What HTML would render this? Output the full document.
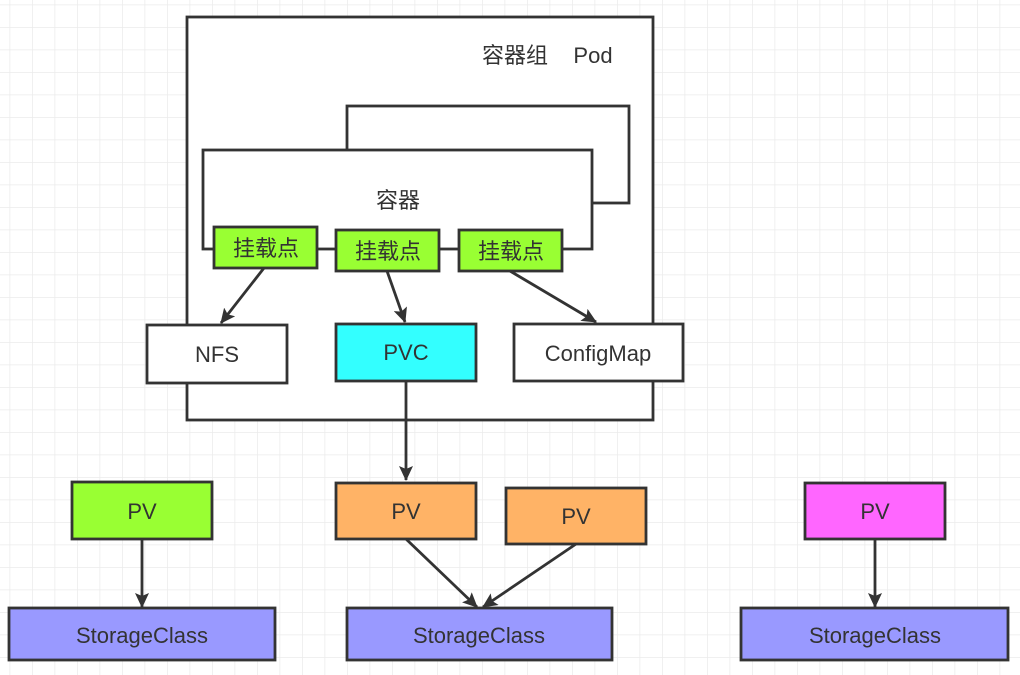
<!DOCTYPE html>
<html><head><meta charset="utf-8"><style>
html,body{margin:0;padding:0;background:#fff;}
svg{display:block;}
text{font-family:"Liberation Sans","Noto Sans CJK SC",sans-serif;fill:#333;}
</style></head><body>
<svg width="1020" height="675" viewBox="0 0 1020 675" xmlns="http://www.w3.org/2000/svg">
<defs>
<pattern id="g" x="9.5" y="4.5" width="22.5" height="22.5" patternUnits="userSpaceOnUse">
<path d="M0 0H22.5M0 0V22.5" stroke="#ebebeb" stroke-width="1.5" fill="none"/>
</pattern>
<marker id="a" markerWidth="16" markerHeight="14" refX="14" refY="7" orient="auto" markerUnits="userSpaceOnUse">
<path d="M0 0L15 7L0 14L3 7Z" fill="#333"/>
</marker>
</defs>
<rect width="1020" height="675" fill="url(#g)"/>
<g stroke="#333" stroke-width="2.8">
<rect x="187" y="17" width="466" height="403" fill="#fff"/>
<rect x="347" y="106" width="282" height="97" fill="#fff"/>
<rect x="203" y="150" width="389" height="99" fill="#fff"/>
<rect x="214" y="227" width="103" height="41" fill="#9f3"/>
<rect x="336" y="230" width="103" height="41" fill="#9f3"/>
<rect x="459" y="230" width="103" height="41" fill="#9f3"/>
<rect x="147" y="325" width="140" height="58" fill="#fff"/>
<rect x="336" y="324" width="140" height="57" fill="#3ff"/>
<rect x="514" y="324" width="169" height="57" fill="#fff"/>
<rect x="72" y="482" width="140" height="57" fill="#9f3"/>
<rect x="336" y="483" width="140" height="56" fill="#ffb366"/>
<rect x="506" y="488" width="140" height="56" fill="#ffb366"/>
<rect x="805" y="483" width="140" height="56" fill="#f6f"/>
<rect x="9" y="608" width="266" height="52" fill="#99f"/>
<rect x="347" y="608" width="265" height="52" fill="#99f"/>
<rect x="741" y="608" width="267" height="52" fill="#99f"/>
</g>
<g stroke="#333" stroke-width="2.8" fill="none" marker-end="url(#a)">
<line x1="264" y1="268" x2="221" y2="323"/>
<line x1="387" y1="271" x2="405" y2="322"/>
<line x1="510" y1="271" x2="596" y2="322"/>
<line x1="406" y1="381" x2="406" y2="480"/>
<line x1="406" y1="539" x2="477" y2="607"/>
<line x1="576" y1="544" x2="483" y2="607"/>
<line x1="142" y1="539" x2="142" y2="607"/>
<line x1="875" y1="539" x2="875" y2="607"/>
</g>
<g font-size="22" text-anchor="middle">
<text x="515" y="63">容器组</text>
<text x="593" y="63">Pod</text>
<text x="398" y="208">容器</text>
<text x="266" y="256">挂载点</text>
<text x="388" y="259">挂载点</text>
<text x="511" y="259">挂载点</text>
<text x="217" y="362">NFS</text>
<text x="406" y="360">PVC</text>
<text x="598" y="361">ConfigMap</text>
<text x="142" y="519">PV</text>
<text x="406" y="519">PV</text>
<text x="576" y="524">PV</text>
<text x="875" y="519">PV</text>
<text x="142" y="643">StorageClass</text>
<text x="479" y="643">StorageClass</text>
<text x="875" y="643">StorageClass</text>
</g>
</svg>
</body></html>
